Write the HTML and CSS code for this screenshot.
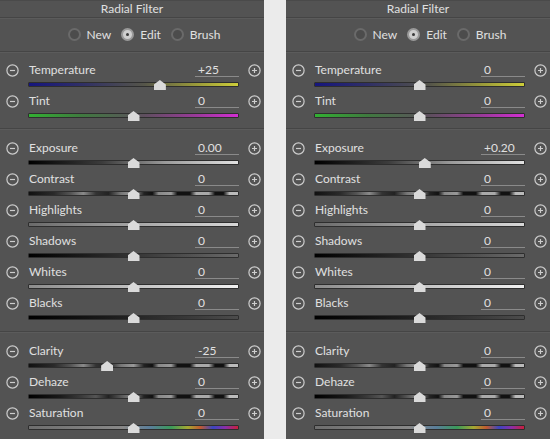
FILE: index.html
```html
<!DOCTYPE html>
<html>
<head>
<meta charset="utf-8">
<link rel="stylesheet" href="styles.css">
</head>
<body>
<div class="panel">
  <div class="title">Radial Filter</div>
  <div class="modes">
    <label class="radio"><span class="dot"></span>New</label>
    <label class="radio"><span class="dot on"></span>Edit</label>
    <label class="radio"><span class="dot"></span>Brush</label>
  </div>
  <div class="section first">
    <div class="row"><span class="btn minus"><svg viewBox="0 0 13 13"><circle cx="6.5" cy="6.5" r="5.6"/><path d="M4 6.5h5"/></svg></span><div class="head"><span class="label">Temperature</span><span class="value">+25</span></div><span class="btn plus"><svg viewBox="0 0 13 13"><circle cx="6.5" cy="6.5" r="5.6"/><path d="M4 6.5h5M6.5 4v5"/></svg></span><div class="slider"><div class="track temp"></div><div class="thumb" style="left:62.5%"></div></div></div>
    <div class="row"><span class="btn minus"><svg viewBox="0 0 13 13"><circle cx="6.5" cy="6.5" r="5.6"/><path d="M4 6.5h5"/></svg></span><div class="head"><span class="label">Tint</span><span class="value">0</span></div><span class="btn plus"><svg viewBox="0 0 13 13"><circle cx="6.5" cy="6.5" r="5.6"/><path d="M4 6.5h5M6.5 4v5"/></svg></span><div class="slider"><div class="track tint"></div><div class="thumb" style="left:50%"></div></div></div>
  </div>
  <div class="section">
    <div class="row"><span class="btn minus"><svg viewBox="0 0 13 13"><circle cx="6.5" cy="6.5" r="5.6"/><path d="M4 6.5h5"/></svg></span><div class="head"><span class="label">Exposure</span><span class="value">0.00</span></div><span class="btn plus"><svg viewBox="0 0 13 13"><circle cx="6.5" cy="6.5" r="5.6"/><path d="M4 6.5h5M6.5 4v5"/></svg></span><div class="slider"><div class="track exposure"></div><div class="thumb" style="left:50%"></div></div></div>
    <div class="row"><span class="btn minus"><svg viewBox="0 0 13 13"><circle cx="6.5" cy="6.5" r="5.6"/><path d="M4 6.5h5"/></svg></span><div class="head"><span class="label">Contrast</span><span class="value">0</span></div><span class="btn plus"><svg viewBox="0 0 13 13"><circle cx="6.5" cy="6.5" r="5.6"/><path d="M4 6.5h5M6.5 4v5"/></svg></span><div class="slider"><div class="track dashed"></div><div class="thumb" style="left:50%"></div></div></div>
    <div class="row"><span class="btn minus"><svg viewBox="0 0 13 13"><circle cx="6.5" cy="6.5" r="5.6"/><path d="M4 6.5h5"/></svg></span><div class="head"><span class="label">Highlights</span><span class="value">0</span></div><span class="btn plus"><svg viewBox="0 0 13 13"><circle cx="6.5" cy="6.5" r="5.6"/><path d="M4 6.5h5M6.5 4v5"/></svg></span><div class="slider"><div class="track highlights"></div><div class="thumb" style="left:50%"></div></div></div>
    <div class="row"><span class="btn minus"><svg viewBox="0 0 13 13"><circle cx="6.5" cy="6.5" r="5.6"/><path d="M4 6.5h5"/></svg></span><div class="head"><span class="label">Shadows</span><span class="value">0</span></div><span class="btn plus"><svg viewBox="0 0 13 13"><circle cx="6.5" cy="6.5" r="5.6"/><path d="M4 6.5h5M6.5 4v5"/></svg></span><div class="slider"><div class="track shadows"></div><div class="thumb" style="left:50%"></div></div></div>
    <div class="row"><span class="btn minus"><svg viewBox="0 0 13 13"><circle cx="6.5" cy="6.5" r="5.6"/><path d="M4 6.5h5"/></svg></span><div class="head"><span class="label">Whites</span><span class="value">0</span></div><span class="btn plus"><svg viewBox="0 0 13 13"><circle cx="6.5" cy="6.5" r="5.6"/><path d="M4 6.5h5M6.5 4v5"/></svg></span><div class="slider"><div class="track whites"></div><div class="thumb" style="left:50%"></div></div></div>
    <div class="row"><span class="btn minus"><svg viewBox="0 0 13 13"><circle cx="6.5" cy="6.5" r="5.6"/><path d="M4 6.5h5"/></svg></span><div class="head"><span class="label">Blacks</span><span class="value">0</span></div><span class="btn plus"><svg viewBox="0 0 13 13"><circle cx="6.5" cy="6.5" r="5.6"/><path d="M4 6.5h5M6.5 4v5"/></svg></span><div class="slider"><div class="track blacks"></div><div class="thumb" style="left:50%"></div></div></div>
  </div>
  <div class="section last">
    <div class="row"><span class="btn minus"><svg viewBox="0 0 13 13"><circle cx="6.5" cy="6.5" r="5.6"/><path d="M4 6.5h5"/></svg></span><div class="head"><span class="label">Clarity</span><span class="value">-25</span></div><span class="btn plus"><svg viewBox="0 0 13 13"><circle cx="6.5" cy="6.5" r="5.6"/><path d="M4 6.5h5M6.5 4v5"/></svg></span><div class="slider"><div class="track dashed"></div><div class="thumb" style="left:37.5%"></div></div></div>
    <div class="row"><span class="btn minus"><svg viewBox="0 0 13 13"><circle cx="6.5" cy="6.5" r="5.6"/><path d="M4 6.5h5"/></svg></span><div class="head"><span class="label">Dehaze</span><span class="value">0</span></div><span class="btn plus"><svg viewBox="0 0 13 13"><circle cx="6.5" cy="6.5" r="5.6"/><path d="M4 6.5h5M6.5 4v5"/></svg></span><div class="slider"><div class="track dashed dark"></div><div class="thumb" style="left:50%"></div></div></div>
    <div class="row"><span class="btn minus"><svg viewBox="0 0 13 13"><circle cx="6.5" cy="6.5" r="5.6"/><path d="M4 6.5h5"/></svg></span><div class="head"><span class="label">Saturation</span><span class="value">0</span></div><span class="btn plus"><svg viewBox="0 0 13 13"><circle cx="6.5" cy="6.5" r="5.6"/><path d="M4 6.5h5M6.5 4v5"/></svg></span><div class="slider"><div class="track saturation"></div><div class="thumb" style="left:50%"></div></div></div>
  </div>
</div>

<div class="panel">
  <div class="title">Radial Filter</div>
  <div class="modes">
    <label class="radio"><span class="dot"></span>New</label>
    <label class="radio"><span class="dot on"></span>Edit</label>
    <label class="radio"><span class="dot"></span>Brush</label>
  </div>
  <div class="section first">
    <div class="row"><span class="btn minus"><svg viewBox="0 0 13 13"><circle cx="6.5" cy="6.5" r="5.6"/><path d="M4 6.5h5"/></svg></span><div class="head"><span class="label">Temperature</span><span class="value">0</span></div><span class="btn plus"><svg viewBox="0 0 13 13"><circle cx="6.5" cy="6.5" r="5.6"/><path d="M4 6.5h5M6.5 4v5"/></svg></span><div class="slider"><div class="track temp"></div><div class="thumb" style="left:50%"></div></div></div>
    <div class="row"><span class="btn minus"><svg viewBox="0 0 13 13"><circle cx="6.5" cy="6.5" r="5.6"/><path d="M4 6.5h5"/></svg></span><div class="head"><span class="label">Tint</span><span class="value">0</span></div><span class="btn plus"><svg viewBox="0 0 13 13"><circle cx="6.5" cy="6.5" r="5.6"/><path d="M4 6.5h5M6.5 4v5"/></svg></span><div class="slider"><div class="track tint"></div><div class="thumb" style="left:50%"></div></div></div>
  </div>
  <div class="section">
    <div class="row"><span class="btn minus"><svg viewBox="0 0 13 13"><circle cx="6.5" cy="6.5" r="5.6"/><path d="M4 6.5h5"/></svg></span><div class="head"><span class="label">Exposure</span><span class="value">+0.20</span></div><span class="btn plus"><svg viewBox="0 0 13 13"><circle cx="6.5" cy="6.5" r="5.6"/><path d="M4 6.5h5M6.5 4v5"/></svg></span><div class="slider"><div class="track exposure"></div><div class="thumb" style="left:52.5%"></div></div></div>
    <div class="row"><span class="btn minus"><svg viewBox="0 0 13 13"><circle cx="6.5" cy="6.5" r="5.6"/><path d="M4 6.5h5"/></svg></span><div class="head"><span class="label">Contrast</span><span class="value">0</span></div><span class="btn plus"><svg viewBox="0 0 13 13"><circle cx="6.5" cy="6.5" r="5.6"/><path d="M4 6.5h5M6.5 4v5"/></svg></span><div class="slider"><div class="track dashed"></div><div class="thumb" style="left:50%"></div></div></div>
    <div class="row"><span class="btn minus"><svg viewBox="0 0 13 13"><circle cx="6.5" cy="6.5" r="5.6"/><path d="M4 6.5h5"/></svg></span><div class="head"><span class="label">Highlights</span><span class="value">0</span></div><span class="btn plus"><svg viewBox="0 0 13 13"><circle cx="6.5" cy="6.5" r="5.6"/><path d="M4 6.5h5M6.5 4v5"/></svg></span><div class="slider"><div class="track highlights"></div><div class="thumb" style="left:50%"></div></div></div>
    <div class="row"><span class="btn minus"><svg viewBox="0 0 13 13"><circle cx="6.5" cy="6.5" r="5.6"/><path d="M4 6.5h5"/></svg></span><div class="head"><span class="label">Shadows</span><span class="value">0</span></div><span class="btn plus"><svg viewBox="0 0 13 13"><circle cx="6.5" cy="6.5" r="5.6"/><path d="M4 6.5h5M6.5 4v5"/></svg></span><div class="slider"><div class="track shadows"></div><div class="thumb" style="left:50%"></div></div></div>
    <div class="row"><span class="btn minus"><svg viewBox="0 0 13 13"><circle cx="6.5" cy="6.5" r="5.6"/><path d="M4 6.5h5"/></svg></span><div class="head"><span class="label">Whites</span><span class="value">0</span></div><span class="btn plus"><svg viewBox="0 0 13 13"><circle cx="6.5" cy="6.5" r="5.6"/><path d="M4 6.5h5M6.5 4v5"/></svg></span><div class="slider"><div class="track whites"></div><div class="thumb" style="left:50%"></div></div></div>
    <div class="row"><span class="btn minus"><svg viewBox="0 0 13 13"><circle cx="6.5" cy="6.5" r="5.6"/><path d="M4 6.5h5"/></svg></span><div class="head"><span class="label">Blacks</span><span class="value">0</span></div><span class="btn plus"><svg viewBox="0 0 13 13"><circle cx="6.5" cy="6.5" r="5.6"/><path d="M4 6.5h5M6.5 4v5"/></svg></span><div class="slider"><div class="track blacks"></div><div class="thumb" style="left:50%"></div></div></div>
  </div>
  <div class="section last">
    <div class="row"><span class="btn minus"><svg viewBox="0 0 13 13"><circle cx="6.5" cy="6.5" r="5.6"/><path d="M4 6.5h5"/></svg></span><div class="head"><span class="label">Clarity</span><span class="value">0</span></div><span class="btn plus"><svg viewBox="0 0 13 13"><circle cx="6.5" cy="6.5" r="5.6"/><path d="M4 6.5h5M6.5 4v5"/></svg></span><div class="slider"><div class="track dashed"></div><div class="thumb" style="left:50%"></div></div></div>
    <div class="row"><span class="btn minus"><svg viewBox="0 0 13 13"><circle cx="6.5" cy="6.5" r="5.6"/><path d="M4 6.5h5"/></svg></span><div class="head"><span class="label">Dehaze</span><span class="value">0</span></div><span class="btn plus"><svg viewBox="0 0 13 13"><circle cx="6.5" cy="6.5" r="5.6"/><path d="M4 6.5h5M6.5 4v5"/></svg></span><div class="slider"><div class="track dashed dark"></div><div class="thumb" style="left:50%"></div></div></div>
    <div class="row"><span class="btn minus"><svg viewBox="0 0 13 13"><circle cx="6.5" cy="6.5" r="5.6"/><path d="M4 6.5h5"/></svg></span><div class="head"><span class="label">Saturation</span><span class="value">0</span></div><span class="btn plus"><svg viewBox="0 0 13 13"><circle cx="6.5" cy="6.5" r="5.6"/><path d="M4 6.5h5M6.5 4v5"/></svg></span><div class="slider"><div class="track saturation"></div><div class="thumb" style="left:50%"></div></div></div>
  </div>
</div>
</body>
</html>
```

FILE: styles.css
```css
html, body {
  margin: 0;
  padding: 0;
}
body {
  background: #ebebeb;
  display: flex;
  gap: 22px;
  height: 439px;
  overflow: hidden;
  font-family: Lato, "Liberation Sans", sans-serif;
  font-size: 12px;
  color: #e0e0e0;
}
.panel {
  width: 264px;
  height: 439px;
  background: #535353;
  border-top: 1px solid #4a4a4a;
  box-sizing: border-box;
}
.title {
  height: 16px;
  line-height: 16px;
  text-align: center;
  border-bottom: 1px solid #454545;
  box-shadow: 0 1px 0 #5b5b5b;
}
.modes {
  height: 33px;
  display: flex;
  justify-content: center;
  align-items: center;
  gap: 10px;
  padding-left: 24px;
  border-bottom: 1px solid #454545;
  box-shadow: 0 1px 0 #5b5b5b;
}
.radio {
  display: flex;
  align-items: center;
  gap: 6px;
}
.dot {
  width: 13px;
  height: 13px;
  border-radius: 50%;
  box-sizing: border-box;
  border: 2px solid #6a6a6a;
  background: #4c4c4c;
  position: relative;
}
.dot.on {
  background: #cfcfcf;
  border-color: #9a9a9a;
}
.dot.on::after {
  content: "";
  position: absolute;
  left: 3px;
  top: 3px;
  width: 3px;
  height: 3px;
  border-radius: 50%;
  background: #3a3a3a;
}
.section {
  padding: 9px 0 6px;
  border-bottom: 1px solid #454545;
  box-shadow: 0 1px 0 #5b5b5b;
}
.section.first {
  padding-top: 8px;
}
.section.last {
  border-bottom: none;
  box-shadow: none;
}
.section + .section {
  padding-bottom: 7px;
}
.row {
  display: grid;
  grid-template-columns: 28px 211px 25px;
  grid-template-rows: 20px 11px;
}
.btn {
  grid-row: 1;
  align-self: center;
  width: 13px;
  height: 13px;
  display: block;
  margin-top: 1px;
}
.btn svg {
  width: 13px;
  height: 13px;
  display: block;
  fill: none;
  stroke: #cdcdcd;
  stroke-width: 1.2;
}
.minus {
  grid-column: 1;
  margin-left: 6px;
}
.plus {
  grid-column: 3;
  margin-left: 9px;
}
.head {
  grid-column: 2;
  grid-row: 1;
  display: flex;
  align-items: flex-start;
}
.label {
  padding-left: 1px;
  line-height: 20px;
}
.value {
  margin-left: auto;
  width: 44px;
  height: 17px;
  line-height: 20px;
  box-sizing: border-box;
  padding-left: 3px;
  border-bottom: 1px solid #8a8a8a;
  overflow: visible;
}
.slider {
  grid-column: 2;
  grid-row: 2;
  position: relative;
}
.track {
  margin-top: 2px;
  height: 5px;
  border: 1px solid #2e2e2e;
  border-radius: 1px;
  box-sizing: border-box;
}
.thumb {
  position: absolute;
  top: 0;
  width: 12px;
  height: 10px;
  margin-left: -6px;
  background: #dadada;
  clip-path: polygon(50% 0, 100% 45%, 100% 100%, 0 100%, 0 45%);
}
.temp {
  background: linear-gradient(to right, #15157e, #2f2f66 25%, #55554a 55%, #9a9a3a 80%, #cdcd3a);
}
.tint {
  background: linear-gradient(to right, #32b032, #3f7a3f 25%, #5e4f5e 55%, #9a3a9a 80%, #d22ed2);
}
.exposure {
  background: linear-gradient(to right, #000, #3c3c3c 35%, #9a9a9a 65%, #e2e2e2);
}
.highlights {
  background: linear-gradient(to right, #6a6a6a, #a0a0a0 45%, #d8d8d8);
}
.shadows {
  background: linear-gradient(to right, #000, #2a2a2a 40%, #6a6a6a);
}
.whites {
  background: linear-gradient(to right, #8c8c8c, #bdbdbd 45%, #f0f0f0);
}
.blacks {
  background: linear-gradient(to right, #000, #1c1c1c 40%, #4c4c4c);
}
.dashed {
  background: linear-gradient(to right,
    #111 0%, #2a2a2a 12%, #555 20%, #8a8a8a 26%, #333 32%, #222 38%, #777 44%, #999 50%,
    #222 55%, #111 59%, #888 62%, #999 68%, #111 71%, #111 77%, #aaa 80%, #aaa 86%,
    #111 89%, #111 93%, #bbb 96%, #bbb 100%);
}
.dashed.dark {
  background: linear-gradient(to right,
    #000 0%, #1a1a1a 15%, #3a3a3a 25%, #555 32%, #222 38%, #555 44%, #888 50%,
    #222 55%, #111 59%, #888 62%, #999 68%, #111 71%, #111 77%, #aaa 80%, #aaa 86%,
    #111 89%, #111 93%, #bbb 96%, #bbb 100%);
}
.saturation {
  background: linear-gradient(to right, #6e6e6e 0%, #888 45%, #5a7e9a 58%, #3a9a5a 68%, #a6a832 76%, #c05a30 82%, #3a46c0 88%, #8a2ea8 94%, #c8203c 100%);
}
```
